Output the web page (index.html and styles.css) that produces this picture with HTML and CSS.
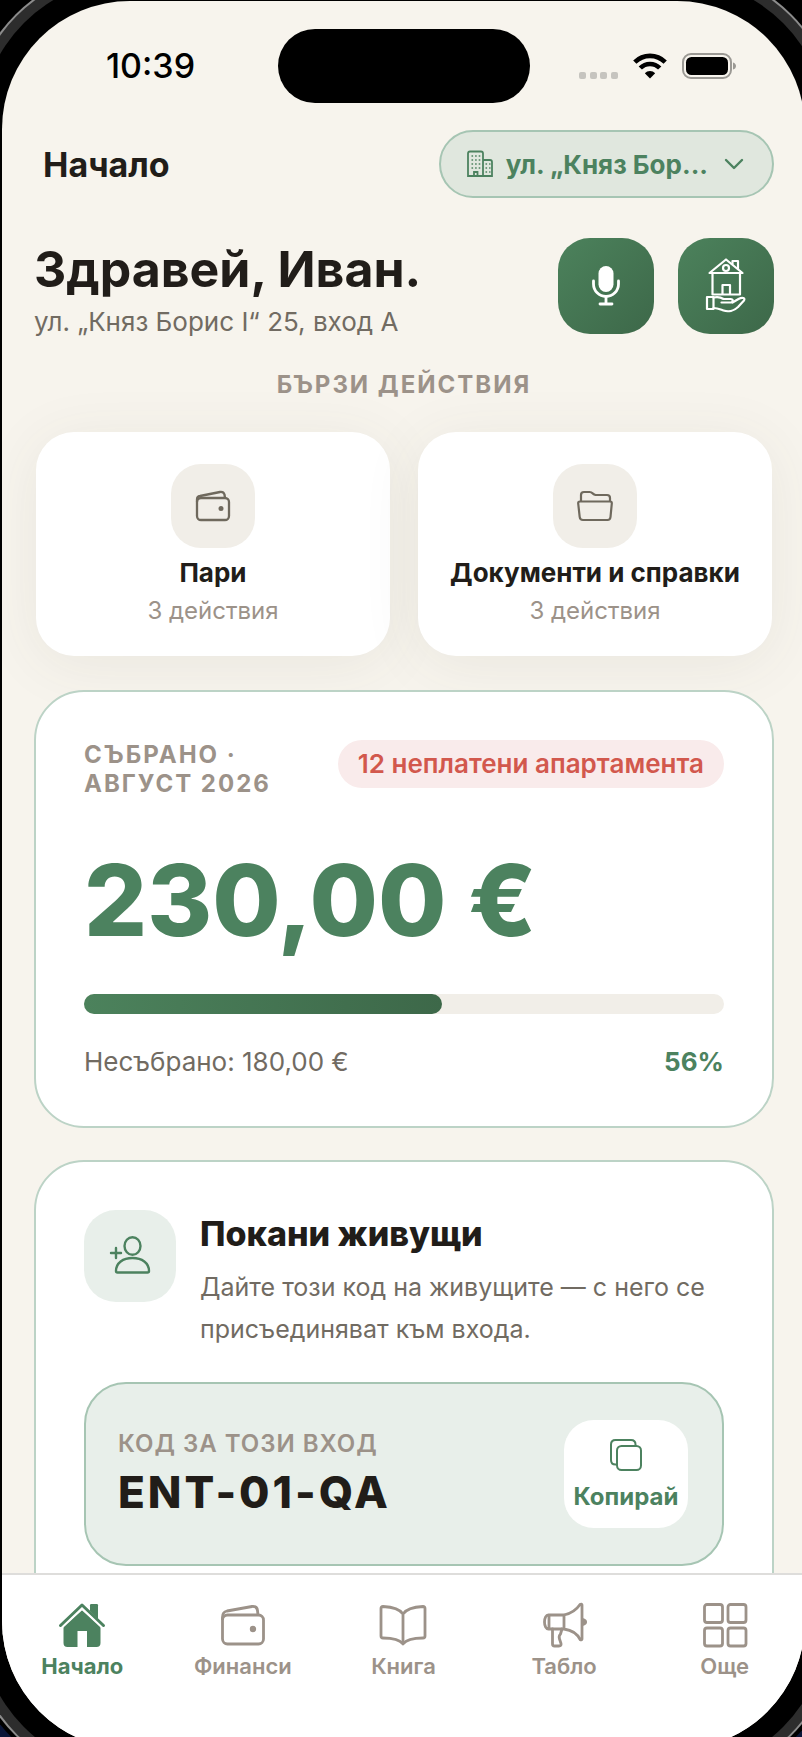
FILE: index.html
```html
<!DOCTYPE html>
<html lang="bg">
<head>
    <meta charset="UTF-8">
    <meta name="viewport" content="width=device-width, initial-scale=1">
    <title>Начало</title>
    <link rel="stylesheet" href="styles.css">
</head>
<body>
<div class="screen">
    <div class="status">
        <div class="status-time">10:39</div>
        <div class="island"></div>
        <div class="status-icons">
            <svg class="dots" width="40" height="26" viewBox="0 0 40 26" fill="#c6c4bf">
                <rect x="0" y="19" width="7" height="7" rx="2"/>
                <rect x="11" y="19" width="7" height="7" rx="2"/>
                <rect x="21" y="19" width="7" height="7" rx="2"/>
                <rect x="32" y="19" width="7" height="7" rx="2"/>
            </svg>
            <svg class="wifi" width="34" height="26" viewBox="0 0 34 26" fill="none" stroke="#000" stroke-width="4.6">
                <path d="M1.8 9.2a21.5 21.5 0 0 1 30.4 0"/>
                <path d="M7.3 15a13.7 13.7 0 0 1 19.4 0"/>
                <path d="M17 25.5l-5.2-5.3a7.4 7.4 0 0 1 10.4 0z" fill="#000" stroke="none"/>
            </svg>
            <svg width="55" height="26" viewBox="0 0 55 26">
                <rect x="1" y="1" width="48" height="24" rx="8" fill="none" stroke="#9b9994" stroke-width="2"/>
                <rect x="4" y="4" width="42" height="18" rx="5.5"/>
                <path d="M51 9.5c4 1 4 6 0 7z" fill="#9b9994"/>
            </svg>
        </div>
    </div>

    <main class="content">
        <header class="topbar">
            <div class="topbar-title">Начало</div>
            <button class="address" type="button">
                <svg width="26" height="28" viewBox="0 0 26 28" fill="none" stroke="currentColor" stroke-width="1.8">
                    <path d="M1 26V3.500Q1 1.500 3 1.500H14Q16 1.500 16 3.500V26zM16 10H23Q25 10 25 12V26H16M7 26v-4h3.500v4"/>
                    <path d="M4.500 6h9M4.500 10h9M4.500 14h9M4.500 18h9M18.500 14h5M18.500 18h5M18.500 22h5" stroke-width="1.6" stroke-dasharray="1.6 2"/>
                </svg>
                <span class="address-text">ул. „Княз Бор...</span>
                <svg width="20" height="12" viewBox="0 0 20 12" fill="none" stroke="currentColor" stroke-width="2.4" stroke-linecap="round" stroke-linejoin="round">
                    <path d="M2 2l8 8 8-8"/>
                </svg>
            </button>
        </header>

        <section class="greeting">
            <div class="greeting-text">
                <h1>Здравей, Иван.</h1>
                <p>ул. „Княз Борис I“ 25, вход А</p>
            </div>
            <button class="action" type="button" aria-label="Гласово съобщение">
                <svg width="40" height="42" viewBox="0 0 40 42" fill="none" stroke="#fff" stroke-width="2.8" stroke-linecap="round">
                    <rect x="12.5" y="1" width="15" height="26" rx="7.5" fill="#fff" stroke="none"/>
                    <path d="M7.500 16v3a12.500 12.500 0 0 0 25 0v-3M20 32v6M14 39h12"/>
                </svg>
            </button>
            <button class="action" type="button" aria-label="Моят дом">
                <svg width="42" height="56" viewBox="0 0 42 56" fill="none" stroke="#fff" stroke-width="2.2" stroke-linejoin="round" stroke-linecap="round">
                    <path d="M4.500 15L21 1.500 37.500 15z"/>
                    <path d="M27.500 6V3H33v8"/>
                    <circle cx="21" cy="10" r="3"/>
                    <path d="M7.500 15v21.500H35V15M17.500 36.500V27H25v9.500"/>
                    <path d="M2 39h6.500v12H2z"/>
                    <path d="M8.500 39.500c4-1 7-.5 10 1.500h7c3 0 3 3.500 0 3.500h-9M27.500 44.500l6-3.500c4-2 7-1 5.500 1.500l-6 6.500c-4 4-10 5-14.500 3.500-3-1-6-2.500-10-2.500"/>
                </svg>
            </button>
        </section>

        <h2 class="section-label">БЪРЗИ ДЕЙСТВИЯ</h2>

        <section class="quick">
            <button class="quick-card" type="button">
                <span class="quick-icon">
                    <svg width="36" height="32" viewBox="0 0 36 32" fill="none" stroke="currentColor" stroke-width="2.3" stroke-linejoin="round">
                        <rect x="2" y="8" width="32" height="22" rx="4"/>
                        <path d="M2 12V9.500Q2 6.500 5 6L25 2Q28.500 1.500 29.500 4.500L30 8"/>
                        <circle cx="26" cy="18.5" r="2.5" fill="currentColor" stroke="none"/>
                    </svg>
                </span>
                <span class="quick-title">Пари</span>
                <span class="quick-sub">3 действия</span>
            </button>
            <button class="quick-card" type="button">
                <span class="quick-icon">
                    <svg width="36" height="32" viewBox="0 0 36 32" fill="none" stroke="currentColor" stroke-width="2.2" stroke-linejoin="round">
                        <path d="M4 12V5Q4 2 7 2h5.500q2 0 3 1.200T18.500 5H30q3 0 3 3v4"/>
                        <path d="M3 11.500h30q2 0 1.800 2L33.500 27q-.3 3-3 3H6q-3 0-3.300-3L1.200 13.500q-.2-2 1.800-2z"/>
                    </svg>
                </span>
                <span class="quick-title">Документи и справки</span>
                <span class="quick-sub">3 действия</span>
            </button>
        </section>

        <section class="card">
            <div class="card-head">
                <div class="label">СЪБРАНО ·<br>АВГУСТ 2026</div>
                <div class="unpaid">12 неплатени апартамента</div>
            </div>
            <div class="amount">230,00 €</div>
            <div class="bar" role="progressbar" aria-valuenow="56" aria-valuemin="0" aria-valuemax="100">
                <div class="bar-fill" style="width: 56%"></div>
            </div>
            <div class="card-foot">
                <span>Несъбрано: 180,00 €</span>
                <strong>56%</strong>
            </div>
        </section>

        <section class="card card-last">
            <div class="invite">
                <div class="invite-icon">
                    <svg width="42" height="40" viewBox="0 0 42 40" fill="none" stroke="currentColor" stroke-width="2.4" stroke-linecap="round" stroke-linejoin="round">
                        <ellipse cx="23.5" cy="10" rx="8" ry="8.8"/>
                        <path d="M7 35c0-8 7-13 16.500-13S40 27 40 35q0 1.500-1.500 1.500h-30Q7 36.500 7 35z"/>
                        <path d="M2 17h10M7 12v10"/>
                    </svg>
                </div>
                <div class="invite-text">
                    <h2>Покани живущи</h2>
                    <p>Дайте този код на живущите — с него се присъединяват към входа.</p>
                </div>
            </div>
            <div class="code">
                <div>
                    <div class="code-label">КОД ЗА ТОЗИ ВХОД</div>
                    <div class="code-value">ENT-01-QA</div>
                </div>
                <button class="copy" type="button">
                    <svg width="32" height="32" viewBox="0 0 32 32" fill="none" stroke="currentColor" stroke-width="2">
                        <rect x="7" y="7" width="24" height="24" rx="4.5"/>
                        <path d="M7 25.500H5.500Q1 25.500 1 21V5.500Q1 1 5.500 1H21Q25.500 1 25.500 5.500V7"/>
                    </svg>
                    Копирай
                </button>
            </div>
        </section>
    </main>

    <nav class="tabs">
        <a class="tab tab-active" href="#home">
            <svg width="48" height="46" viewBox="0 0 48 46" fill="currentColor">
                <path d="M24 8L5.500 24.500V41q0 4 4 4H19.500V29H29v16h9.500q4 0 4-4V24.500z"/>
                <path d="M32 3.500q0-1.500 1.500-1.500h5Q40 2 40 3.500V17l-8-7z"/>
                <path d="M2.500 23.500L24 3.500l21.500 20" fill="none" stroke="#fff" stroke-width="7"/>
                <path d="M2.500 23.500L24 3l21.500 20.500" fill="none" stroke="currentColor" stroke-width="3" stroke-linecap="round" stroke-linejoin="round"/>
                <path d="M32 9V3.500q0-1.500 1.500-1.500h5Q40 2 40 3.500V17z"/>
            </svg>
            Начало
        </a>
        <a class="tab" href="#finance">
            <svg width="48" height="46" viewBox="0 0 48 46" fill="none" stroke="currentColor" stroke-width="2.8" stroke-linejoin="round">
                <rect x="3.5" y="13" width="41" height="29" rx="5"/>
                <path d="M3.500 18v-3Q3.500 10 8 9L33 4.500Q38 4 38.500 8.500L39 13"/>
                <circle cx="34" cy="27" r="3.2" fill="currentColor" stroke="none"/>
            </svg>
            Финанси
        </a>
        <a class="tab" href="#book">
            <svg width="48" height="46" viewBox="0 0 48 46" fill="none" stroke="currentColor" stroke-width="2.8" stroke-linejoin="round" stroke-linecap="round">
                <path d="M24 12C21 7.500 14 5 4 4.500q-2 0-2 2V34q0 2 2 2c10 0 17 2 20 6 3-4 10-6 20-6q2 0 2-2V6.500q0-2-2-2C34 5 27 7.500 24 12zM24 12v30"/>
            </svg>
            Книга
        </a>
        <a class="tab" href="#board">
            <svg width="48" height="46" viewBox="0 0 48 46" fill="none" stroke="currentColor" stroke-width="2.8" stroke-linejoin="round" stroke-linecap="round">
                <path d="M9 13h15v14H9zM9 13c-6-1-6 15 0 14M24 13C31 11.500 37 7 40 2.500q1.500-1 2 .5v34q-.5 1.500-2 .5C37 31 31 28 24 27"/>
                <path d="M43 18c3 1 3 3 0 4" stroke-width="3.6"/>
                <path d="M12.500 27v15q0 2 2 2h4.500q2.500 0 2-2.500l-1.500-4.500q-1-3 1-5l1.500-5"/>
            </svg>
            Табло
        </a>
        <a class="tab" href="#more">
            <svg width="48" height="46" viewBox="0 0 48 46" fill="none" stroke="currentColor" stroke-width="2.8">
                <rect x="3.5" y="2.5" width="18" height="18" rx="2.5"/>
                <rect x="27" y="2.5" width="18" height="18" rx="2.5"/>
                <rect x="3.5" y="26" width="18" height="18" rx="2.5"/>
                <rect x="27" y="26" width="18" height="18" rx="2.5"/>
            </svg>
            Още
        </a>
    </nav>
</div>
</body>
</html>
```

FILE: styles.css
```css
*{
    margin: 0;
    padding: 0;
    box-sizing: border-box;
}
body{
    height: 100vh;
    overflow: hidden;
    background: linear-gradient(#000 50%, #0a1638 50%);
    font-family: Inter, "Liberation Sans", sans-serif;
    color: #211d19;
}
button{
    border: 0;
    font-family: inherit;
    color: inherit;
    cursor: pointer;
}
a{
    text-decoration: none;
}
svg{
    flex-shrink: 0;
}

/* phone screen, the shadows are the bezel and the metal frame */
.screen{
    display: flex;
    flex-direction: column;
    height: calc(100vh + 11px);
    margin: 1px -3px 0 2px;
    overflow: hidden;
    border-radius: 128px;
    background: #f7f4ed;
    box-shadow: 0 0 0 22px #000, 0 0 0 32px #2d2d2d, 0 0 0 34px #8c8c8c, 0 0 0 38px #000;
}

/* status bar */
.status{
    display: grid;
    grid-template-columns: 1fr 252px 1fr;
    align-items: center;
    padding: 28px 68px 0;
}
.status-time{
    padding-left: 36px;
    font-size: 34px;
    font-weight: 500;
    line-height: 40px;
    color: #000;
}
.island{
    height: 74px;
    border-radius: 37px;
    background: #000;
}
.status-icons{
    display: flex;
    justify-content: flex-end;
}
.wifi{
    margin: 0 15px 0 14px;
}

.content{
    flex: 1;
    min-height: 0;
    padding: 27px 31px 0 32px;
    overflow-y: auto;
    scrollbar-width: none;
}
.topbar{
    display: flex;
    align-items: center;
    justify-content: space-between;
    padding-left: 9px;
}
.topbar-title{
    font-size: 34px;
    font-weight: 700;
}
.address{
    display: flex;
    align-items: center;
    height: 68px;
    padding: 0 28px 0 26px;
    border: 2px solid #a6c5b3;
    border-radius: 34px;
    background: #e0e7de;
    color: #4c825f;
}
.address-text{
    margin: 0 16px 0 13px;
    font-size: 26px;
    font-weight: 700;
}

.greeting{
    display: flex;
    gap: 24px;
    margin-top: 40px;
}
.greeting-text{
    flex: 1;
}
.greeting h1{
    font-size: 50px;
    font-weight: 700;
    line-height: 62px;
    white-space: nowrap;
}
.greeting p{
    margin-top: 5px;
    font-size: 26px;
    line-height: 34px;
    color: #716b62;
}
.action{
    display: flex;
    align-items: center;
    justify-content: center;
    width: 96px;
    height: 96px;
    border-radius: 32px;
    background: linear-gradient(135deg, #4c825c, #3d6849);
}

.section-label{
    margin-top: 31px;
    font-size: 24px;
    font-weight: 700;
    line-height: 30px;
    letter-spacing: 2px;
    text-align: center;
    color: #9c9289;
}

.quick{
    display: grid;
    grid-template-columns: 1fr 1fr;
    gap: 28px;
    margin: 32px 2px 34px;
}
.quick-card{
    display: flex;
    flex-direction: column;
    align-items: center;
    height: 224px;
    padding-top: 32px;
    border-radius: 38px;
    background: #fff;
    box-shadow: 0 8px 60px rgba(80, 75, 60, .08);
}
.quick-icon{
    display: flex;
    align-items: center;
    justify-content: center;
    width: 84px;
    height: 84px;
    border-radius: 30px;
    background: #f1eee8;
    color: #6f695d;
}
.quick-title{
    margin-top: 9px;
    font-size: 26px;
    font-weight: 700;
    line-height: 32px;
    white-space: nowrap;
}
.quick-sub{
    margin-top: 7px;
    font-size: 24px;
    line-height: 30px;
    color: #9c9289;
}

.card{
    position: relative;
    margin-top: 32px;
    padding: 48px;
    border: 2px solid #bcd3c6;
    border-radius: 50px;
    background: #fff;
}
.card-last{
    padding-bottom: 96px;
}
.card-head{
    display: flex;
    align-items: flex-start;
    justify-content: space-between;
}
.label{
    font-size: 24px;
    font-weight: 700;
    line-height: 29px;
    letter-spacing: 2px;
    color: #9c9289;
}
.unpaid{
    padding: 0 20px;
    border-radius: 24px;
    background: #f9ebeb;
    font-size: 26px;
    font-weight: 600;
    line-height: 48px;
    white-space: nowrap;
    color: #d2584d;
}
.amount{
    margin-top: 42px;
    font-size: 99px;
    font-weight: 800;
    line-height: 120px;
    white-space: nowrap;
    color: #4c825f;
}
.bar{
    height: 20px;
    margin-top: 34px;
    border-radius: 10px;
    background: #f1eee8;
}
.bar-fill{
    height: 100%;
    border-radius: 10px;
    background: linear-gradient(90deg, #4c825c, #3d6849);
}
.card-foot{
    display: flex;
    justify-content: space-between;
    margin-top: 32px;
    font-size: 26px;
    line-height: 32px;
    color: #716b62;
}
.card-foot strong{
    font-weight: 700;
    color: #4c825f;
}

.invite{
    display: flex;
    gap: 24px;
}
.invite-icon{
    display: flex;
    flex-shrink: 0;
    align-items: center;
    justify-content: center;
    width: 92px;
    height: 92px;
    border-radius: 32px;
    background: #e8efea;
    color: #4c825f;
}
.invite h2{
    margin-top: 2px;
    font-size: 34px;
    font-weight: 800;
    line-height: 44px;
}
.invite p{
    margin-top: 10px;
    font-size: 25px;
    line-height: 42px;
    color: #716b62;
}
.code{
    display: flex;
    align-items: center;
    justify-content: space-between;
    margin-top: 32px;
    padding: 36px 34px 36px 32px;
    border: 2px solid #a6c5b3;
    border-radius: 42px;
    background: #e8efea;
}
.code-label{
    font-size: 24px;
    font-weight: 600;
    line-height: 30px;
    letter-spacing: 1px;
    color: #9c9289;
}
.code-value{
    margin-top: 6px;
    font-size: 44px;
    font-weight: 800;
    line-height: 54px;
    letter-spacing: 3px;
}
.copy{
    display: flex;
    flex-direction: column;
    align-items: center;
    gap: 11px;
    width: 124px;
    height: 108px;
    padding-top: 19px;
    border-radius: 30px;
    background: #fff;
    font-size: 24px;
    font-weight: 700;
    line-height: 30px;
    color: #4c825f;
}

/* bottom tabs */
.tabs{
    display: grid;
    grid-template-columns: repeat(5, 1fr);
    height: 176px;
    padding-top: 27px;
    border-top: 2px solid #dedddb;
    background: #fff;
}
.tab{
    display: flex;
    flex-direction: column;
    align-items: center;
    gap: 3px;
    font-size: 22px;
    font-weight: 600;
    line-height: 30px;
    color: #9c9289;
}
.tab-active{
    font-weight: 700;
    color: #4c825f;
}
```
